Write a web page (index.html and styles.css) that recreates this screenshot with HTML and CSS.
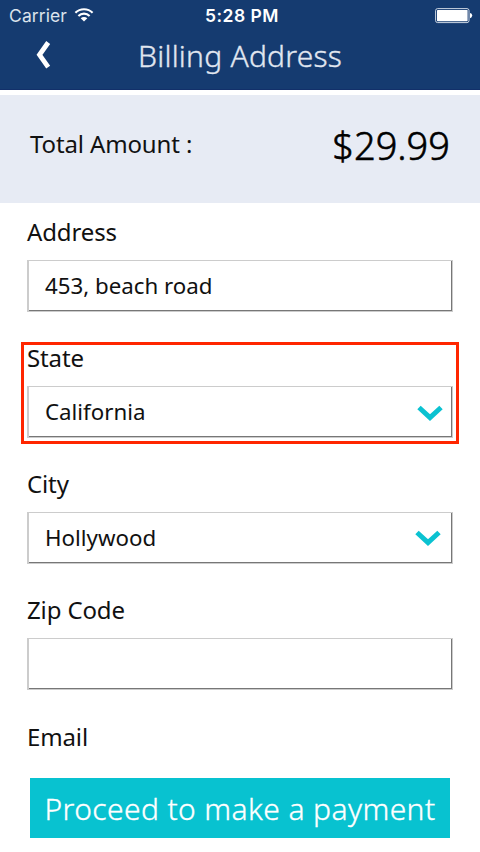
FILE: index.html
```html
<!DOCTYPE html>
<html lang="en">
<head>
<meta charset="utf-8">
<title>Billing Address</title>
<link rel="stylesheet" href="styles.css">
</head>
<body>
<header class="header">
  <div class="status">
    <div class="status-left">
      <span class="carrier">Carrier</span>
      <svg class="wifi" width="20" height="14" viewBox="0 0 20 14" fill="none" stroke="#fff" stroke-width="2.1"><path d="M1.400 4.800C6.100.1 13.900.1 18.600 4.800"/><path d="M4.400 7.900C7.500 4.900 12.500 4.900 15.600 7.900"/><path d="M10 13.400 6.700 10.200C8.500 8.500 11.500 8.500 13.300 10.200Z" fill="#fff" stroke="none"/></svg>
    </div>
    <span class="time">5:28 PM</span>
    <div class="status-right">
      <svg class="battery" width="38" height="16" viewBox="0 0 38 16"><rect x=".6" y=".6" width="33.400" height="14" rx="2" fill="none" stroke="#cbd5e3"/><rect x="2" y="2" width="30.600" height="11.200" rx=".6" fill="#fff"/><path d="M35 5q2.200.3 2.200 2.600T35 10.200Z" fill="#fff"/></svg>
    </div>
  </div>
  <div class="nav">
    <svg class="back" width="16" height="28" viewBox="0 0 16 28" fill="none" stroke="#fff" stroke-width="4.800"><path d="M13.200 1.500 4.500 13.800 13.200 26.100"/></svg>
    <h1 class="title"><span>Billing Address</span></h1>
  </div>
</header>
<section class="total">
  <span class="total-label">Total Amount :</span>
  <span class="total-price">$29.99</span>
</section>
<main class="form">
  <div class="field">
    <div class="label">Address</div>
    <div class="box"><span>453, beach road</span></div>
  </div>
  <div class="field highlighted">
    <div class="label">State</div>
    <div class="box"><span>California</span><svg class="chevron" width="26" height="18" viewBox="0 0 26 18" fill="none" stroke="#0bc2d1" stroke-width="5"><path d="M2 2.500 13 12.500 24 2.500"/></svg></div>
  </div>
  <div class="field">
    <div class="label">City</div>
    <div class="box"><span>Hollywood</span><svg class="chevron chevron-city" width="26" height="18" viewBox="0 0 26 18" fill="none" stroke="#0bc2d1" stroke-width="5"><path d="M2 2.500 13 12.500 24 2.500"/></svg></div>
  </div>
  <div class="field">
    <div class="label">Zip Code</div>
    <div class="box"></div>
  </div>
  <div class="label email">Email</div>
  <button class="pay" type="button"><span>Proceed to make a payment</span></button>
</main>
</body>
</html>
```
FILE: styles.css
```css
*, *::after { box-sizing: border-box; }
body {
  margin: 0;
  width: 480px;
  height: 852px;
  overflow: hidden;
  background: #fff;
  color: #111;
  font-family: "Noto Sans", sans-serif;
}
svg { display: block; flex: none; }
span { white-space: nowrap; }
.header {
  height: 90px;
  background: #153b70;
  border-bottom: 1px solid #12306a;
  color: #fff;
}
.status {
  display: grid;
  grid-template-columns: 1fr auto 1fr;
  height: 32px;
  padding: 0 8px 0 9px;
  font: 17.5px/32px Inter, sans-serif;
}
.status-left { display: flex; gap: 8px; }
.carrier { color: #dce3ec; letter-spacing: 0.1px; }
.wifi { margin: 8px 0 0 -1px; }
.time {
  position: relative;
  left: 1.5px;
  font-weight: 600;
  letter-spacing: 0.5px;
}
.status-right { display: flex; justify-content: flex-end; }
.battery { margin: 8px -1px 0 0; }
.nav {
  display: flex;
  height: 57px;
  padding-left: 35px;
}
.back { margin-top: 9px; }
.title {
  margin: 0 0 0 87px;
  font-size: 30px;
  font-weight: 300;
  line-height: 47px;
  letter-spacing: 0.23px;
  color: #e1e7f0;
  -webkit-text-stroke: 0.35px;
}
.total {
  display: flex;
  justify-content: space-between;
  height: 108px;
  margin-top: 5px;
  padding: 0 30px;
  background: #e7ebf4;
}
.total-label {
  font-size: 24px;
  line-height: 97px;
  letter-spacing: -0.13px;
}
.total-price {
  font-size: 38px;
  font-weight: 300;
  line-height: 100px;
  color: #000;
  -webkit-text-stroke: 0.6px;
}
.form { padding: 11px 27px 0; }
.field {
  position: relative;
  height: 126px;
}
.label {
  height: 46px;
  font-size: 24px;
  line-height: 36px;
  letter-spacing: -0.13px;
}
.box {
  display: flex;
  justify-content: space-between;
  width: 426px;
  height: 52px;
  padding-left: 16px;
  border: 1px solid #ccc;
  border-left-width: 2px;
  box-shadow: inset -1px -1px #777;
  font-size: 22.3px;
  line-height: 50px;
}
.chevron { margin: 18px 9px 0 0; }
.chevron-city { margin: 17px 11px 0 0; }
.highlighted::after {
  content: "";
  position: absolute;
  left: -6px;
  top: 2px;
  width: 438px;
  height: 102px;
  border: 3px solid #ff2600;
}
.email { height: 60px; padding-top: 1px; }
.pay {
  display: flex;
  justify-content: center;
  width: 420px;
  height: 60px;
  margin-left: 3px;
  padding: 0;
  border: 0;
  background: #08c2d0;
  color: #fff;
  font: 300 30px/62px "Noto Sans", sans-serif;
  letter-spacing: 0.4px;
  -webkit-text-stroke: 0.35px;
}
```
